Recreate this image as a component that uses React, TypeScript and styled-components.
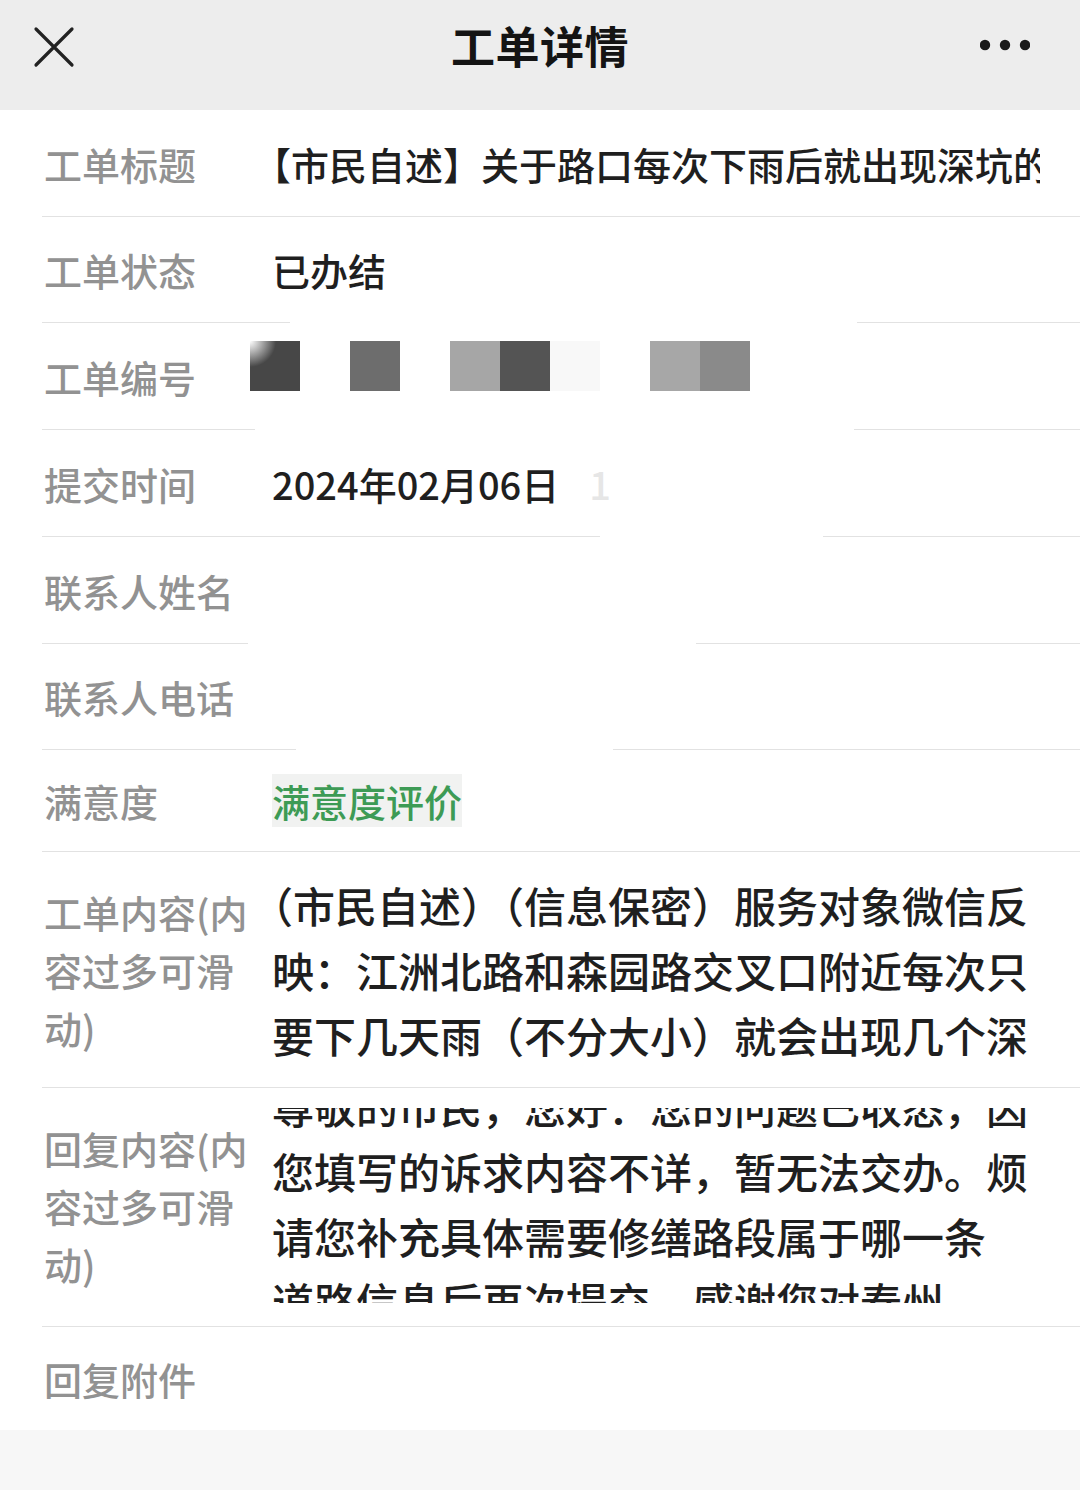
import { useLayoutEffect, useRef } from 'react';
import styled, { createGlobalStyle } from 'styled-components';

const GlobalStyle = createGlobalStyle`
  html, body {
    margin: 0;
    padding: 0;
    background: #ffffff;
  }
  body {
    font-family: "Noto Sans CJK SC", "Noto Sans", sans-serif;
    color: #1f1f1f;
  }
`;

const Page = styled.div`
  width: 1080px;
  min-height: 1490px;
  display: flex;
  flex-direction: column;
  background: #ffffff;
`;

const Header = styled.header`
  height: 110px;
  box-sizing: border-box;
  padding-bottom: 20px;
  background: #ededed;
  display: grid;
  grid-template-columns: 1fr auto 1fr;
  align-items: center;
`;

const IconButton = styled.button<{ $end?: boolean }>`
  border: 0;
  background: none;
  padding: 0;
  height: 48px;
  display: flex;
  align-items: center;
  justify-self: ${(p) => (p.$end ? 'end' : 'start')};
  margin: ${(p) => (p.$end ? '0 50px 0 0' : '4px 0 0 33px')};
`;

const Title = styled.h1`
  margin: 0;
  font-size: 44px;
  font-weight: 700;
  color: #141414;
  letter-spacing: 0.5px;
`;

const List = styled.main`
  padding-left: 42px;
`;

const Row = styled.div<{ $h: number; $gap?: [number, number]; $last?: boolean; $top?: boolean }>`
  height: ${(p) => p.$h}px;
  display: flex;
  align-items: ${(p) => (p.$top ? 'flex-start' : 'center')};
  box-sizing: border-box;
  background-image: ${(p) =>
    p.$last
      ? 'none'
      : p.$gap
      ? `linear-gradient(to right, #e2e2e2 ${p.$gap[0] - 42}px, transparent ${p.$gap[0] - 42}px, transparent ${p.$gap[1] - 42}px, #e2e2e2 ${p.$gap[1] - 42}px)`
      : 'linear-gradient(#e2e2e2, #e2e2e2)'};
  background-repeat: no-repeat;
  background-position: left bottom;
  background-size: 100% 1px;
`;

const Label = styled.div<{ $top?: boolean }>`
  flex: 0 0 213px;
  margin-right: 15px;
  padding-left: 2px;
  font-size: 38px;
  line-height: 58px;
  color: #929292;
  font-weight: 500;
  padding-top: ${(p) => (p.$top ? '31px' : '0')};
`;

const Value = styled.div`
  width: 768px;
  font-size: 38px;
  line-height: 60px;
  color: #1f1f1f;
  font-weight: 500;
  white-space: nowrap;
  overflow: hidden;
  text-spacing-trim: trim-start;
`;

const Faint = styled.span`
  margin-left: 30px;
  color: #e6e6e6;
`;

const RateLink = styled.a`
  display: inline-block;
  background: #f1f2f1;
  color: #3d9b55;
  line-height: 53px;
  text-decoration: none;
`;

const Mosaic = styled.div`
  display: flex;
  margin-left: -22px;
  margin-bottom: 22px;
`;

const Tile = styled.span<{ $c: string; $glare?: boolean }>`
  width: 50px;
  height: 50px;
  background: ${(p) =>
    p.$glare
      ? `radial-gradient(circle at 0 0, #ffffff 0, #c8c8c8 8px, ${p.$c} 26px)`
      : p.$c};
`;

const ScrollBox = styled.div`
  margin-top: 20px;
  width: 790px;
  height: 195px;
  overflow-y: auto;
  scrollbar-width: none;
  &::-webkit-scrollbar {
    display: none;
  }
`;

const Line = styled.p`
  margin: 0;
  font-size: 42px;
  line-height: 65px;
  color: #1f1f1f;
  font-weight: 500;
  white-space: nowrap;
  text-spacing-trim: trim-start;
`;

const Footer = styled.footer`
  flex: 1;
  background: #f7f7f7;
`;

const CloseIcon = () => (
  <svg width="42" height="42" viewBox="0 0 42 42">
    <path d="M3 3 L39 39 M39 3 L3 39" stroke="#222" strokeWidth="3.2" strokeLinecap="round" />
  </svg>
);

const MoreIcon = () => (
  <svg width="50" height="14" viewBox="0 0 50 14">
    <circle cx="5" cy="7" r="5.2" fill="#1a1a1a" />
    <circle cx="25" cy="7" r="5.2" fill="#1a1a1a" />
    <circle cx="45" cy="7" r="5.2" fill="#1a1a1a" />
  </svg>
);

const tiles = [
  { c: '#474747', glare: true },
  { c: '#ffffff' },
  { c: '#6d6d6d' },
  { c: '#ffffff' },
  { c: '#a6a6a6' },
  { c: '#545454' },
  { c: '#f8f8f8' },
  { c: '#ffffff' },
  { c: '#a7a7a7' },
  { c: '#8a8a8a' },
];

const content = [
  '（市民自述）（信息保密）服务对象微信反',
  '映：江洲北路和森园路交叉口附近每次只',
  '要下几天雨（不分大小）就会出现几个深',
];

const reply = [
  '尊敬的市民，您好：您的问题已收悉，因',
  '您填写的诉求内容不详，暂无法交办。烦',
  '请您补充具体需要修缮路段属于哪一条',
  '道路信息后再次提交，感谢您对泰州',
];

export default function App() {
  const replyRef = useRef<HTMLDivElement>(null);

  useLayoutEffect(() => {
    if (replyRef.current) replyRef.current.scrollTop = 35;
  }, []);

  return (
    <Page>
      <GlobalStyle />
      <Header>
        <IconButton aria-label="关闭">
          <CloseIcon />
        </IconButton>
        <Title>工单详情</Title>
        <IconButton $end aria-label="更多">
          <MoreIcon />
        </IconButton>
      </Header>

      <List>
        <Row $h={107}>
          <Label>工单标题</Label>
          <Value>【市民自述】关于路口每次下雨后就出现深坑的问题</Value>
        </Row>
        <Row $h={106} $gap={[290, 857]}>
          <Label>工单状态</Label>
          <Value>已办结</Value>
        </Row>
        <Row $h={107} $gap={[255, 854]}>
          <Label>工单编号</Label>
          <Mosaic>
            {tiles.map((t, i) => (
              <Tile key={i} $c={t.c} $glare={t.glare} />
            ))}
          </Mosaic>
        </Row>
        <Row $h={107} $gap={[600, 823]}>
          <Label>提交时间</Label>
          <Value>
            2024年02月06日<Faint>1</Faint>
          </Value>
        </Row>
        <Row $h={107} $gap={[248, 696]}>
          <Label>联系人姓名</Label>
          <Value />
        </Row>
        <Row $h={106} $gap={[296, 613]}>
          <Label>联系人电话</Label>
          <Value />
        </Row>
        <Row $h={102}>
          <Label>满意度</Label>
          <Value>
            <RateLink>满意度评价</RateLink>
          </Value>
        </Row>
        <Row $h={236} $top>
          <Label $top>工单内容(内容过多可滑动)</Label>
          <ScrollBox>
            {content.map((l, i) => (
              <Line key={i}>{l}</Line>
            ))}
          </ScrollBox>
        </Row>
        <Row $h={239} $top>
          <Label $top>回复内容(内容过多可滑动)</Label>
          <ScrollBox ref={replyRef}>
            {reply.map((l, i) => (
              <Line key={i}>{l}</Line>
            ))}
          </ScrollBox>
        </Row>
        <Row $h={103} $last>
          <Label>回复附件</Label>
        </Row>
      </List>
      <Footer />
    </Page>
  );
}
